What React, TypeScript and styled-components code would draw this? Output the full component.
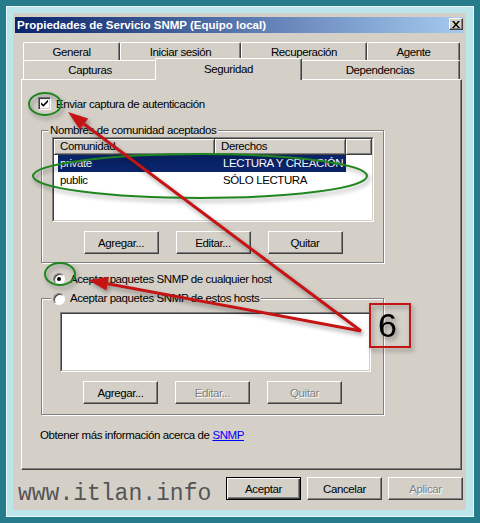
import styled, { createGlobalStyle, css } from "styled-components";

const communities = [
  { name: "private", rights: "LECTURA Y CREACIÓN", selected: true },
  { name: "public", rights: "SÓLO LECTURA", selected: false },
];

export default function App() {
  return (
    <>
      <GlobalStyle />
      <Page>
        <Frame>
          <Dialog>
            <TitleBar>
              <Title>Propiedades de Servicio SNMP (Equipo local)</Title>
              <CloseButton>
                <svg width="8" height="7" viewBox="0 0 8 7">
                  <path d="M0 0h2l2 2.4L6 0h2L5 3.5 8 7H6L4 4.6 2 7H0l3-3.5z" fill="#000" />
                </svg>
              </CloseButton>
            </TitleBar>

            <TabStrip>
              <TabRow $h={18}>
                <Tab $w={97}>General</Tab>
                <Tab $w={121}>Iniciar sesión</Tab>
                <Tab $w={126}>Recuperación</Tab>
                <Tab $w={93}>Agente</Tab>
              </TabRow>
              <TabRow $h={19}>
                <Tab $w={134}>Capturas</Tab>
                <Tab $w={143} $active>Seguridad</Tab>
                <Tab $w={160}>Dependencias</Tab>
              </TabRow>
            </TabStrip>

            <Panel>
              <OptionRow $ml={0} $mt={0}>
                <CheckBox>
                  <svg width="7" height="7" viewBox="0 0 7 7">
                    <path d="M0 2.2l2.3 2.3L7 -0.2V2L2.3 6.7 0 4.4z" fill="#000" />
                  </svg>
                </CheckBox>
                <span>Enviar captura de autenticación</span>
              </OptionRow>

              <GroupBox $mt={14} $pl={10} $pr={9} $pb={8}>
                <GroupTitle $ml={-4}>Nombres de comunidad aceptados</GroupTitle>
                <Sunken $w={322} $h={85}>
                  <SunkenInner>
                    <ListHeader>
                      <HeaderCell $w={161}>Comunidad</HeaderCell>
                      <HeaderCell $w={131}>Derechos</HeaderCell>
                      <HeaderCell $w={26} />
                    </ListHeader>
                    {communities.map((c) => (
                      <ListRow key={c.name} $selected={c.selected}>
                        <ListCell $w={157} $pl={2}>{c.name}</ListCell>
                        <ListCell $w={131} $pl={8}>{c.rights}</ListCell>
                      </ListRow>
                    ))}
                  </SunkenInner>
                </Sunken>
                <ButtonRow $shift={0}>
                  <Button>Agregar...</Button>
                  <Button>Editar...</Button>
                  <Button>Quitar</Button>
                </ButtonRow>
              </GroupBox>

              <OptionRow $ml={15} $mt={9}>
                <Radio $checked />
                <span>Aceptar paquetes SNMP de cualquier host</span>
              </OptionRow>

              <GroupBox $mt={7} $pl={18} $pr={12} $pb={10}>
                <GroupTitle $ml={-9}>
                  <Radio />
                  <span>Aceptar paquetes SNMP de estos hosts</span>
                </GroupTitle>
                <Sunken $w={311} $h={60} style={{ marginTop: 7 }}>
                  <SunkenInner />
                </Sunken>
                <ButtonRow $shift={6}>
                  <Button>Agregar...</Button>
                  <Button disabled>Editar...</Button>
                  <Button disabled>Quitar</Button>
                </ButtonRow>
              </GroupBox>

              <InfoText>
                Obtener más información acerca de <LinkText>SNMP</LinkText>
              </InfoText>
            </Panel>

            <BottomBar>
              <Watermark>www.itlan.info</Watermark>
              <DialogButtons>
                <Button $default>Aceptar</Button>
                <Button>Cancelar</Button>
                <Button disabled>Aplicar</Button>
              </DialogButtons>
            </BottomBar>
          </Dialog>
        </Frame>

        <Overlay viewBox="0 0 480 523">
          <g fill="none" stroke="#1f861f" strokeWidth="2">
            <ellipse cx="45" cy="104" rx="16" ry="11" />
            <ellipse cx="200" cy="176" rx="167" ry="22" />
            <ellipse cx="60" cy="274" rx="15" ry="11" />
          </g>
          <g stroke="#c41414" strokeWidth="3" fill="#c41414">
            <line x1="361" y1="331" x2="84" y2="124" />
            <polygon points="68,112 88.2,118.4 79.8,129.6" stroke="none" />
            <line x1="361" y1="331" x2="107.7" y2="283.7" />
            <polygon points="88,280 109,276.8 106.4,290.6" stroke="none" />
          </g>
          <rect x="370" y="304" width="40" height="43" fill="none" stroke="#c41414" strokeWidth="2" />
          <text x="387.5" y="337" fontSize="34" textAnchor="middle" fontFamily="'Liberation Sans', Arial, sans-serif" fill="#000">
            6
          </text>
        </Overlay>
      </Page>
    </>
  );
}

const GlobalStyle = createGlobalStyle`
  html, body {
    margin: 0;
    padding: 0;
    background: #267c8b;
  }
  body {
    font-family: "Liberation Sans", Arial, sans-serif;
  }
`;

const Page = styled.div`
  position: relative;
  width: 480px;
  height: 523px;
  box-sizing: border-box;
  padding: 6px 0 0 6px;
  background: #267c8b;
  overflow: hidden;
`;

const Frame = styled.div`
  width: 468px;
  box-sizing: border-box;
  padding: 6px 7px 6px 6px;
  background: #bde6ec;
  border: 1px solid #eaf9fb;
`;

const Dialog = styled.div`
  width: 453px;
  height: 497px;
  box-sizing: border-box;
  padding: 4px 2px 0 2px;
  background: #d4d0c8;
  display: flex;
  flex-direction: column;
  overflow: hidden;
  font-size: 11.5px;
  letter-spacing: -0.4px;
  color: #000;
`;

const TitleBar = styled.div`
  height: 16px;
  display: flex;
  align-items: center;
  justify-content: space-between;
  padding: 0 1px 0 2px;
  background: linear-gradient(to right, #0a246a, #a6caf0);
`;

const Title = styled.span`
  color: #fff;
  font-weight: bold;
  font-size: 11.5px;
  letter-spacing: 0;
`;

const CloseButton = styled.div`
  width: 14px;
  height: 12px;
  box-sizing: border-box;
  align-self: flex-start;
  margin-top: 1px;
  display: flex;
  align-items: center;
  justify-content: center;
  background: #d4d0c8;
  border: 1px solid;
  border-color: #fff #404040 #404040 #fff;
  box-shadow: inset -1px -1px 0 #808080;
`;

const TabStrip = styled.div`
  margin: 9px 2px 0 6px;
  padding: 0 2px;
  display: flex;
  flex-direction: column;
`;

const TabRow = styled.div<{ $h: number }>`
  display: flex;
  height: ${(p) => p.$h}px;
`;

const Tab = styled.div<{ $w: number; $active?: boolean }>`
  width: ${(p) => p.$w}px;
  height: 100%;
  box-sizing: border-box;
  display: flex;
  align-items: center;
  justify-content: center;
  background: #d4d0c8;
  border-top: 1px solid #fff;
  border-left: 1px solid #fff;
  border-right: 1px solid #404040;
  border-radius: 2px 2px 0 0;
  box-shadow: inset -1px 0 0 #808080;
  ${(p) =>
    p.$active &&
    css`
      position: relative;
      z-index: 2;
      width: ${p.$w + 4}px;
      height: 22px;
      margin: -2px -2px 0;
      padding-bottom: 2px;
    `}
`;

const Panel = styled.div`
  height: 391px;
  box-sizing: border-box;
  margin: 0 2px 0 6px;
  padding: 17px 0 0 16px;
  border: 1px solid;
  border-color: #fff #404040 #404040 #fff;
  box-shadow: inset -1px -1px 0 #808080;
  display: flex;
  flex-direction: column;
  align-items: flex-start;
`;

const OptionRow = styled.div<{ $ml: number; $mt: number }>`
  display: flex;
  align-items: center;
  gap: 5px;
  height: 13px;
  margin: ${(p) => p.$mt}px 0 0 ${(p) => p.$ml}px;
`;

const CheckBox = styled.span`
  width: 13px;
  height: 13px;
  box-sizing: border-box;
  display: flex;
  align-items: center;
  justify-content: center;
  background: #fff;
  border: 1px solid;
  border-color: #808080 #fff #fff #808080;
  box-shadow: inset 1px 1px 0 #404040, inset -1px -1px 0 #d4d0c8;
`;

const Radio = styled.span<{ $checked?: boolean }>`
  width: 12px;
  height: 12px;
  box-sizing: border-box;
  border-radius: 50%;
  display: flex;
  align-items: center;
  justify-content: center;
  background: #fff;
  border: 1px solid;
  border-color: #808080 #fff #fff #808080;
  box-shadow: inset 1px 1px 0 #404040;

  &::after {
    content: "";
    width: 4px;
    height: 4px;
    border-radius: 50%;
    background: ${(p) => (p.$checked ? "#000" : "transparent")};
  }
`;

const GroupBox = styled.fieldset<{ $mt: number; $pl: number; $pr: number; $pb: number }>`
  width: 343px;
  min-width: 0;
  box-sizing: border-box;
  margin: ${(p) => p.$mt}px 0 0 3px;
  padding: 0 ${(p) => p.$pr}px ${(p) => p.$pb}px ${(p) => p.$pl}px;
  border: 1px solid #808080;
  box-shadow: 1px 1px 0 #fff, inset 1px 1px 0 #fff;
`;

const GroupTitle = styled.legend<{ $ml: number }>`
  margin-left: ${(p) => p.$ml}px;
  padding: 0 2px;
  height: 13px;
  line-height: 13px;
  display: flex;
  align-items: center;
  gap: 5px;
  background: #d4d0c8;
`;

const Sunken = styled.div<{ $w: number; $h: number }>`
  width: ${(p) => p.$w}px;
  height: ${(p) => p.$h}px;
  box-sizing: border-box;
  border: 1px solid;
  border-color: #808080 #fff #fff #808080;
`;

const SunkenInner = styled.div`
  height: 100%;
  box-sizing: border-box;
  border: 1px solid;
  border-color: #404040 #d4d0c8 #d4d0c8 #404040;
  background: #fff;
  overflow: hidden;
`;

const ListHeader = styled.div`
  display: flex;
  height: 16px;
`;

const HeaderCell = styled.div<{ $w: number }>`
  width: ${(p) => p.$w}px;
  box-sizing: border-box;
  padding-left: 6px;
  line-height: 15px;
  background: #d4d0c8;
  border-right: 1px solid #404040;
  border-bottom: 1px solid #404040;
  box-shadow: inset 1px 1px 0 #fff, inset -1px -1px 0 #808080;
`;

const ListRow = styled.div<{ $selected?: boolean }>`
  display: flex;
  width: fit-content;
  height: 17px;
  line-height: 17px;
  margin-left: 4px;
  background: ${(p) => (p.$selected ? "#0a246a" : "transparent")};
  color: ${(p) => (p.$selected ? "#fff" : "#000")};
`;

const ListCell = styled.div<{ $w: number; $pl: number }>`
  width: ${(p) => p.$w}px;
  box-sizing: border-box;
  padding-left: ${(p) => p.$pl}px;
  white-space: nowrap;
`;

const ButtonRow = styled.div<{ $shift: number }>`
  display: flex;
  justify-content: center;
  gap: 17px;
  margin-top: 9px;
  padding-right: ${(p) => p.$shift}px;
`;

const Button = styled.button<{ $default?: boolean }>`
  width: 75px;
  height: 23px;
  box-sizing: border-box;
  padding: 0;
  font: inherit;
  letter-spacing: inherit;
  color: #000;
  background: #d4d0c8;
  border: 1px solid;
  border-color: #fff #404040 #404040 #fff;
  box-shadow: inset -1px -1px 0 #808080;

  &:disabled {
    color: #808080;
    text-shadow: 1px 1px 0 #fff;
  }

  ${(p) =>
    p.$default &&
    css`
      border-color: #000;
      box-shadow: inset 1px 1px 0 #fff, inset -1px -1px 0 #404040, inset -2px -2px 0 #808080;
    `}
`;

const InfoText = styled.div`
  margin: 14px 0 0 2px;
  line-height: 13px;
`;

const LinkText = styled.span`
  color: #0000ff;
  text-decoration: underline;
`;

const BottomBar = styled.div`
  display: flex;
  align-items: flex-start;
  margin: 7px 1px 0 3px;
`;

const Watermark = styled.div`
  flex: 1;
  margin-top: 6px;
  font-family: "Liberation Mono", "Courier New", monospace;
  font-size: 23px;
  line-height: 23px;
  letter-spacing: 0;
  color: #555;
`;

const DialogButtons = styled.div`
  display: flex;
  gap: 6px;
`;

const Overlay = styled.svg`
  position: absolute;
  left: 0;
  top: 0;
  width: 480px;
  height: 523px;
  pointer-events: none;
  filter: drop-shadow(2px 3px 2px rgba(0, 0, 0, 0.35));
`;
